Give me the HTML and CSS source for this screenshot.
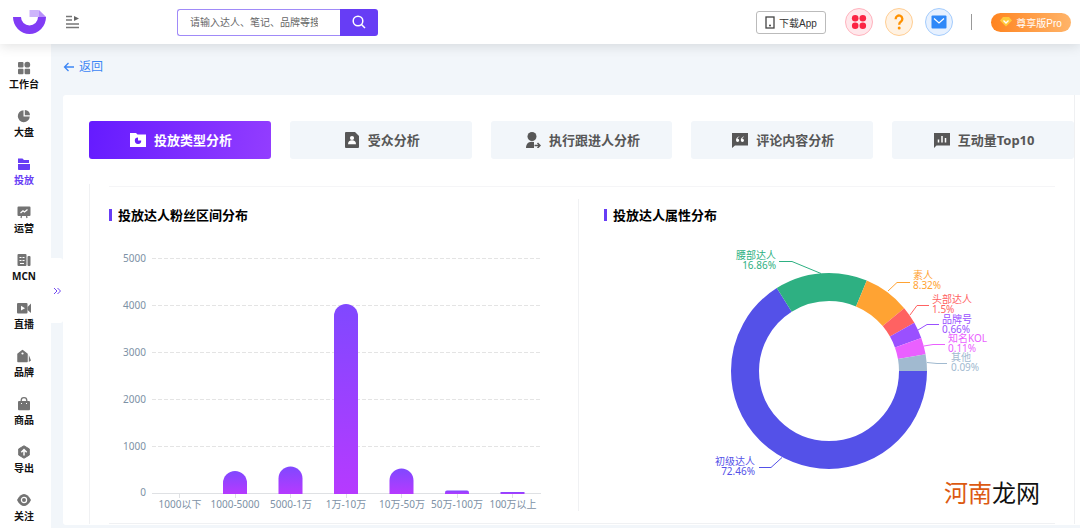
FILE: index.html
```html
<!DOCTYPE html>
<html lang="zh-CN">
<head>
<meta charset="utf-8">
<meta name="viewport" content="width=device-width, initial-scale=1">
<title>投放类型分析</title>
<link rel="stylesheet" href="styles.css">
</head>
<body>
<header class="topbar">
  <svg class="logo" viewBox="0 0 35 26" aria-hidden="true">
    <path d="M1 8h8a8.500 8.500 0 0 0 17 0h8a16.500 17 0 0 1-33 0z" fill="#813cf5"/>
    <path d="M17.500 1h9l7.500 7H26a8.500 8.500 0 0 1-.5 0h-8z" fill="#cdb4fb"/>
    <path d="M27 1l7 7h-7z" fill="#b78ffa"/>
  </svg>
  <button class="menu-toggle" aria-label="收起菜单">
    <svg viewBox="0 0 14 14"><path d="M0 1.500h6M0 5h6M0 9h13M0 12.500h13" stroke="#777" stroke-width="1.300"/><path d="M8 1l5 2.500L8 6z" fill="#666"/></svg>
  </button>
  <form class="search" role="search">
    <input class="search-input" type="text" aria-label="搜索" placeholder="请输入达人、笔记、品牌等搜索">
    <button class="search-button" type="button" aria-label="搜索">
      <svg viewBox="0 0 14 14"><circle cx="6" cy="6" r="4.800" fill="none" stroke="#fff" stroke-width="1.500"/><path d="M9.500 9.500l3.500 3.500" stroke="#fff" stroke-width="1.500"/></svg>
    </button>
  </form>
  <div class="tools">
    <button class="download"><svg viewBox="0 0 10 13"><rect x="1" y="1" width="8" height="11" fill="none" stroke="#444" stroke-width="1.300"/><circle cx="5" cy="9.500" r="1" fill="#444"/></svg>下载App</button>
    <button class="round red" aria-label="应用"><svg viewBox="0 0 16 16" fill="#fb2444"><circle cx="4.200" cy="4.200" r="3.300"/><circle cx="11.800" cy="4.200" r="3.300"/><circle cx="4.200" cy="11.800" r="3.300"/><circle cx="11.800" cy="11.800" r="3.300"/></svg></button>
    <button class="round orange" aria-label="帮助"><svg viewBox="0 0 16 16"><path d="M4.700 5.300V4.900a3.300 3.300 0 1 1 5.500 2.400C9 8.300 8.200 8.700 8.200 10.700" fill="none" stroke="#ff9100" stroke-width="2.300"/><circle cx="8.200" cy="13.900" r="1.500" fill="#ff9100"/></svg></button>
    <button class="round blue" aria-label="消息"><svg viewBox="0 0 16 16"><rect x=".5" y="1.500" width="15" height="13" rx="1" fill="#2f88f8"/><path d="M3 4.500l5 4.500 5-4.500" fill="none" stroke="#fff" stroke-width="1.200"/></svg></button>
    <span class="separator"></span>
    <button class="pro"><svg viewBox="0 0 12 10"><path d="M3 0h6l3 3.500L6 9.500 0 3.500z" fill="#ffc93c"/><path d="M3.500 3.500L6 6l2.500-2.500" fill="none" stroke="#fff" stroke-width="1.300"/></svg>尊享版Pro</button>
  </div>
</header>

<div class="layout">
  <nav class="sidebar" aria-label="主导航">
    <a class="nav-item" href="#"><svg viewBox="0 0 14 14"><rect x="1" y="1" width="5.500" height="5.500" rx="1"/><circle cx="10.300" cy="3.700" r="2.900"/><rect x="1" y="7.700" width="5.500" height="5.500" rx="1"/><rect x="7.600" y="7.700" width="5.500" height="5.500" rx="1"/></svg>工作台</a>
    <a class="nav-item" href="#"><svg viewBox="0 0 14 14"><path d="M6.500 1.200v6.300h6.300A6 6 0 1 1 6.500 1.200z"/><path d="M7.800 1a5.500 5.500 0 0 1 5.200 5.200H7.800z"/></svg>大盘</a>
    <a class="nav-item active" href="#"><svg viewBox="0 0 14 14"><path d="M1 1.500h4.500L7 3h5v3H1z"/><path d="M1 7h12v5.200a.8.8 0 0 1-.8.8H1.800a.8.8 0 0 1-.8-.8z"/></svg>投放</a>
    <a class="nav-item" href="#"><svg viewBox="0 0 14 14"><path d="M1.500 1.500h11a1 1 0 0 1 1 1V10a1 1 0 0 1-1 1h-11a1 1 0 0 1-1-1V2.500a1 1 0 0 1 1-1z"/><path d="M4.500 11L4 13M9.500 11l.5 2" stroke="#737373" stroke-width="1.300"/><path d="M3.500 8l2.500-2.200 1.500 1.200L10.500 4.500" fill="none" stroke="#fff" stroke-width="1.300"/></svg>运营</a>
    <a class="nav-item" href="#"><svg viewBox="0 0 14 14"><rect x=".5" y="1" width="9" height="12" rx="1"/><rect x="10.500" y="3" width="3" height="10" rx="1"/><path d="M2.500 4.500h2M5.500 4.500h2M2.500 7.500h2M5.500 7.500h2M3 10.500h4" stroke="#fff" stroke-width="1.200"/></svg>MCN</a>
    <a class="nav-item" href="#"><svg viewBox="0 0 14 14"><rect x="0" y="2" width="10.500" height="10.500" rx="1"/><path d="M10.500 6L14 2.500v9.500l-3.500-3z"/><path d="M4 4.800L8 7.200 4 9.600z" fill="#fff"/></svg>直播</a>
    <a class="nav-item" href="#"><svg viewBox="0 0 14 14"><path d="M5.500 1.500L10 5V12.500H1V5z" stroke="#737373" stroke-width="1.500" stroke-linejoin="round"/><circle cx="5.500" cy="4.500" r="1.100" fill="#fff"/><path d="M11.800 6l2.200 5.500-2.200 1.500z"/></svg>品牌</a>
    <a class="nav-item" href="#"><svg viewBox="0 0 14 14"><path d="M4.200 5V3.500a2.800 2.800 0 0 1 5.600 0V5" fill="none" stroke="#737373" stroke-width="1.300"/><rect x="1" y="4" width="12" height="9.300" rx="1"/><path d="M4.500 6v1M9.500 6v1" stroke="#fff"/></svg>商品</a>
    <a class="nav-item" href="#"><svg viewBox="0 0 14 14"><path d="M7 .8l5.300 3.100v6.200L7 13.200l-5.300-3.100V3.900z" stroke="#737373" stroke-linejoin="round"/><path d="M7 10.500V5M4.300 7.300L7 4.600l2.700 2.700" fill="none" stroke="#fff" stroke-width="1.500"/></svg>导出</a>
    <a class="nav-item" href="#"><svg viewBox="0 0 14 14"><path d="M0 7c2-4 4.500-6 7-6s5 2 7 6c-2 4-4.500 6-7 6S2 11 0 7z"/><circle cx="7" cy="7" r="2.600" fill="none" stroke="#fff" stroke-width="1.200"/></svg>关注</a>
    <button class="expand" aria-label="展开"><svg viewBox="0 0 8 8"><path d="M1 1l3 3-3 3M4.500 1l3 3-3 3" fill="none" stroke="#7048f0"/></svg></button>
  </nav>

  <main class="content">
    <a class="back" href="#"><svg viewBox="0 0 11 10"><path d="M10.500 5H1M5 1L1 5l4 4" fill="none" stroke="#3d86f5" stroke-width="1.300"/></svg>返回</a>
    <div class="panel">
      <div class="panel-inner">
        <div class="tabs">
          <button class="tab selected"><svg viewBox="0 0 16 16"><path d="M0 1h6l1.500 1.500H16V15H0z" fill="#fff"/><path d="M8 5.500v3h3.200A3.200 3.200 0 1 1 8 5.500z" fill="#6a21fb"/></svg>投放类型分析</button>
          <button class="tab"><svg viewBox="0 0 16 16"><path d="M2 0h9l4 4v11a1 1 0 0 1-1 1H2a1 1 0 0 1-1-1V1a1 1 0 0 1 1-1z"/><circle cx="8" cy="6" r="2.100" fill="#fff"/><path d="M4 12.300c0-2.500 1.500-4 4-4s4 1.500 4 4z" fill="#fff"/></svg>受众分析</button>
          <button class="tab"><svg viewBox="0 0 16 16"><circle cx="7" cy="4.500" r="4.500"/><path d="M1 16c0-4 2-6 5.500-6.300L9 10v6z"/><path d="M9 13.500h6M12.500 11l2.500 2.500-2.500 2.500" fill="none" stroke="#f2f6fa" stroke-width="4"/><path d="M9.500 13.500H15M12.500 11l2.500 2.500-2.500 2.500" fill="none" stroke="#575757" stroke-width="1.500"/></svg>执行跟进人分析</button>
          <button class="tab"><svg viewBox="0 0 16 16"><path d="M0 1h16v12.500H3L0 16z"/><path d="M7.200 4.500C5 5 4 6.500 4 8.300a1.600 1.600 0 1 0 1.600-1.600c0-.8.600-1.300 1.600-1.600zM12 4.500C9.800 5 8.800 6.500 8.800 8.300a1.600 1.600 0 1 0 1.600-1.600c0-.8.600-1.300 1.600-1.600z" fill="#fff"/></svg>评论内容分析</button>
          <button class="tab"><svg viewBox="0 0 16 16"><path d="M0 1h16v12.500H2.500L0 16z"/><path d="M4.500 10.500v-3M8 10.500V4M11.500 10.500V6" stroke="#fff" stroke-width="1.500"/></svg>互动量Top10</button>
        </div>

        <div class="card">
          <div class="columns">
            <section class="column">
              <h2 class="title">投放达人粉丝区间分布</h2>
              <svg class="chart" viewBox="109 225 460 286" role="img" aria-label="投放达人粉丝区间分布柱状图">
                <defs><linearGradient id="bar" x1="0" y1="0" x2="0" y2="1"><stop offset="0" stop-color="#8048ff"/><stop offset="1" stop-color="#b63aff"/></linearGradient></defs>
                <path class="grid" d="M152 258.500h388M152 305.500h388M152 352.500h388M152 399.500h388M152 446.500h388"/>
                <g class="axis-text end">
                  <text x="146" y="262">5000</text><text x="146" y="309">4000</text><text x="146" y="356">3000</text><text x="146" y="403">2000</text><text x="146" y="450">1000</text><text x="146" y="496">0</text>
                </g>
                <path class="axis" d="M152 493.500h389M179.500 494v4M235.500 494v4M290.500 494v4M346.500 494v4M401.500 494v4M457.500 494v4M512.500 494v4"/>
                <g fill="url(#bar)">
                  <path d="M223 494V483a12 12 0 0 1 24 0v11z"/>
                  <path d="M278.500 494V478.500a12 12 0 0 1 24 0V494z"/>
                  <path d="M334 494V316a12 12 0 0 1 24 0v178z"/>
                  <path d="M389.500 494V480.500a12 12 0 0 1 24 0V494z"/>
                  <path d="M445 494v-1.500a2 2 0 0 1 2-2h20a2 2 0 0 1 2 2v1.500z"/>
                  <path d="M500.500 494v-2h24v2z"/>
                </g>
                <g class="axis-text middle">
                  <text x="180" y="508">1000以下</text><text x="235" y="508">1000-5000</text><text x="291" y="508">5000-1万</text><text x="346" y="508">1万-10万</text><text x="402" y="508">10万-50万</text><text x="457" y="508">50万-100万</text><text x="513" y="508">100万以上</text>
                </g>
              </svg>
            </section>
            <section class="column">
              <h2 class="title">投放达人属性分布</h2>
              <svg class="chart" viewBox="604 225 451 286" role="img" aria-label="投放达人属性分布环形图">
                <g class="ring">
                  <circle cx="829" cy="371" r="84" pathLength="360" stroke="#5451e8" stroke-dasharray="237.8 360"/>
                  <circle cx="829" cy="371" r="84" pathLength="360" stroke="#2eb082" stroke-dasharray="54.900 360" stroke-dashoffset="-237.8"/>
                  <circle cx="829" cy="371" r="84" pathLength="360" stroke="#ffa333" stroke-dasharray="27.400 360" stroke-dashoffset="-292.7"/>
                  <circle cx="829" cy="371" r="84" pathLength="360" stroke="#ff6262" stroke-dasharray="10.400 360" stroke-dashoffset="-320.1"/>
                  <circle cx="829" cy="371" r="84" pathLength="360" stroke="#9a50ff" stroke-dasharray="9.800 360" stroke-dashoffset="-330.5"/>
                  <circle cx="829" cy="371" r="84" pathLength="360" stroke="#ea60ff" stroke-dasharray="9.900 360" stroke-dashoffset="-340.3"/>
                  <circle cx="829" cy="371" r="84" pathLength="360" stroke="#a1bad0" stroke-dasharray="9.800 360" stroke-dashoffset="-350.2"/>
                </g>
                <g class="leader">
                  <path d="M779 261.500h13l29 12" stroke="#2eb082"/>
                  <path d="M888 291l9-8.500h13" stroke="#ffa333"/>
                  <path d="M910 315l7-9.500h12" stroke="#ff6262"/>
                  <path d="M918 330l9-5.500h12" stroke="#9a50ff"/>
                  <path d="M924 346l9-1.500h12" stroke="#ea60ff"/>
                  <path d="M927 362.500l10 1h10" stroke="#a1bad0"/>
                  <path d="M782 457.500l-11 10h-12" stroke="#5451e8"/>
                </g>
                <g class="slice-text">
                  <g class="end" fill="#2eb082"><text x="776" y="259">腰部达人</text><text x="776" y="269">16.86%</text></g>
                  <g fill="#ffa333"><text x="913" y="279">素人</text><text x="913" y="289">8.32%</text></g>
                  <g fill="#ff6262"><text x="932" y="303">头部达人</text><text x="932" y="313">1.5%</text></g>
                  <g fill="#9a50ff"><text x="942" y="323">品牌号</text><text x="942" y="333">0.66%</text></g>
                  <g fill="#ea60ff"><text x="948" y="342">知名KOL</text><text x="948" y="352">0.11%</text></g>
                  <g fill="#a1bad0"><text x="951" y="361">其他</text><text x="951" y="371">0.09%</text></g>
                  <g class="end" fill="#5451e8"><text x="755" y="465">初级达人</text><text x="755" y="475">72.46%</text></g>
                </g>
              </svg>
            </section>
          </div>
        </div>
      </div>
      <div class="watermark"><span>河南</span>龙网</div>
    </div>
  </main>
</div>
</body>
</html>
```
FILE: styles.css
```css
* { box-sizing: border-box; }

body {
  margin: 0;
  min-height: 100vh;
  display: flex;
  flex-direction: column;
  background: #f2f6fa;
  color: #111;
  font-family: "Noto Sans", "Noto Sans CJK SC", sans-serif;
  font-size: 10px;
}

button, input { font: inherit; color: inherit; }
button { padding: 0; border: 0; background: none; cursor: pointer; }
a { color: inherit; text-decoration: none; }
svg { display: block; flex: none; }

.topbar {
  position: relative;
  z-index: 2;
  display: flex;
  align-items: center;
  height: 44px;
  padding: 0 9px 0 12px;
  background: #fff;
  box-shadow: 0 2px 12px rgba(0, 0, 0, 0.12);
  font-family: "Liberation Sans", "Noto Sans CJK SC", sans-serif;
}
.logo { width: 35px; height: 26px; }
.menu-toggle { margin-left: 19px; }
.menu-toggle svg { width: 14px; height: 14px; }

.search { display: flex; width: 201px; height: 27px; margin-left: 97px; }
.search-input {
  flex: 1;
  min-width: 0;
  padding: 0 22px 0 12px;
  border: 1px solid #a08af8;
  border-right: 0;
  border-radius: 3px 0 0 3px;
  background: #fff;
  outline: 0;
}
.search-input::placeholder { color: #666; opacity: 1; }
.search-button {
  display: grid;
  place-items: center;
  width: 38px;
  border-radius: 0 3px 3px 0;
  background: #673df5;
}
.search-button svg { width: 14px; height: 14px; }

.tools { display: flex; align-items: center; gap: 12px; margin-left: auto; }
.download {
  display: flex;
  align-items: center;
  justify-content: center;
  gap: 4px;
  width: 70px;
  height: 23px;
  margin-right: 7px;
  border: 1px solid #bbb;
  border-radius: 3px;
  color: #333;
}
.download svg { width: 10px; height: 13px; }
.round {
  display: grid;
  place-items: center;
  width: 28px;
  height: 28px;
  border: 1px solid;
  border-radius: 50%;
}
.round svg { width: 16px; height: 16px; }
.red { background: #ffe7eb; border-color: #ffb3be; }
.orange { background: #fff2e3; border-color: #ffce93; }
.blue { background: #e7f1ff; border-color: #a4ccfd; }
.separator { width: 1px; height: 16px; margin: 0 7px 0 6px; background: #999; }
.pro {
  display: flex;
  align-items: center;
  justify-content: center;
  gap: 4px;
  width: 80px;
  height: 19px;
  border-radius: 10px;
  background: linear-gradient(90deg, #ff8420, #ffb469);
  color: #fff;
}
.pro svg { width: 12px; height: 10px; }

.layout { flex: 1; display: flex; }
.sidebar {
  position: relative;
  flex: none;
  display: flex;
  flex-direction: column;
  gap: 18px;
  width: 51px;
  padding: 17px 3px 0 0;
  background: #fff;
}
.nav-item {
  display: flex;
  flex-direction: column;
  align-items: center;
  gap: 2px;
  font-weight: 700;
  line-height: 14px;
}
.nav-item svg { width: 14px; height: 14px; fill: #737373; }
.nav-item.active { color: #673df5; }
.nav-item.active svg { fill: #673df5; }
.expand {
  position: absolute;
  top: 214px;
  left: 51px;
  display: grid;
  place-items: center;
  width: 12px;
  height: 65px;
  border-radius: 0 3px 3px 0;
  background: #fff;
}
.expand svg { width: 8px; height: 8px; }

.content {
  flex: 1;
  min-width: 0;
  display: flex;
  flex-direction: column;
  padding: 14px 0 3px 12px;
}
.back {
  display: flex;
  align-items: center;
  align-self: flex-start;
  gap: 4px;
  margin-bottom: 19px;
  color: #3d86f5;
  font-size: 12px;
  line-height: 18px;
}
.back svg { width: 12px; height: 10px; }

.panel {
  position: relative;
  flex: 1;
  padding-right: 5px;
  border-radius: 3px 0 0 3px;
  background: #fff;
}
.panel-inner { padding: 26px 0 0 26px; border-right: 1px solid #eff0f2; }
.tabs { display: grid; grid-template-columns: repeat(5, 1fr); gap: 19px; margin-bottom: 25px; }
.tab {
  display: flex;
  align-items: center;
  justify-content: center;
  gap: 8px;
  height: 38px;
  padding-left: 2px;
  border-radius: 3px;
  background: #f2f6fa;
  color: #575757;
  font-size: 13px;
  font-weight: 700;
  line-height: 18px;
}
.tab svg { width: 16px; height: 16px; fill: #575757; }
.tab.selected { background: linear-gradient(100deg, #651bff, #933dff); color: #fff; }

.card { padding: 2px 19px 0; border-left: 1px solid #f0f1f3; }
.columns {
  display: grid;
  grid-template-columns: 470fr 476fr;
  padding: 12px 0;
  border-top: 1px solid #f5f5f7;
  border-bottom: 1px solid #f0f1f3;
}
.column { padding: 6px 9px 0 0; border-right: 1px solid #f0f1f3; }
.column + .column { padding: 6px 0 0 25px; border-right: 0; }
.title {
  display: flex;
  align-items: center;
  gap: 6px;
  margin: 0;
  color: #000;
  font-size: 13px;
  font-weight: 700;
  line-height: 20px;
}
.title::before { content: ""; width: 3px; height: 12px; background: #673df5; }

.chart { width: 100%; height: auto; }
.grid { fill: none; stroke: #e4e4e4; stroke-dasharray: 4 2; }
.axis { fill: none; stroke: #dfe1e4; }
.axis-text { fill: #7d91a5; font-size: 10px; }
.slice-text { font-size: 10px; }
.end { text-anchor: end; }
.middle { text-anchor: middle; }
.ring circle { fill: none; stroke-width: 28; }
.leader { fill: none; }

.watermark {
  position: absolute;
  right: 40px;
  bottom: 14px;
  color: #111;
  font-size: 24px;
  line-height: 36px;
}
.watermark span { color: #dc5a12; }
```
